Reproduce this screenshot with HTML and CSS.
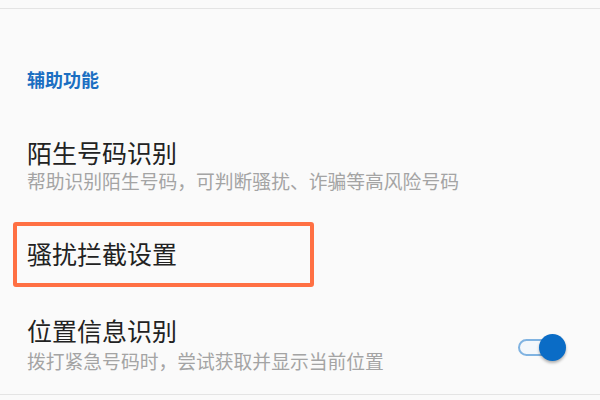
FILE: index.html
```html
<!doctype html>
<html>
  <head>
    <title>辅助功能</title>
    <link rel="stylesheet" href="styles.css">
  </head>
  <body>
    <div class="top-bar"></div>
    <div class="settings">
      <div class="section-title">辅助功能</div>

      <div class="item">
        <div class="item-title">陌生号码识别</div>
        <div class="item-desc">帮助识别陌生号码，可判断骚扰、诈骗等高风险号码</div>
      </div>

      <div class="item highlight">
        <div class="item-title">骚扰拦截设置</div>
      </div>

      <div class="item item-switch">
        <div class="item-text">
          <div class="item-title">位置信息识别</div>
          <div class="item-desc">拨打紧急号码时，尝试获取并显示当前位置</div>
        </div>
        <div class="switch on">
          <div class="switch-track"></div>
          <div class="switch-thumb"></div>
        </div>
      </div>
    </div>
  </body>
</html>
```

FILE: styles.css
```css
* { margin: 0; padding: 0; box-sizing: border-box; }
body {
  background: #fafafa;
  font-family: "Noto Sans CJK SC", "Noto Sans", sans-serif;
  width: 600px;
  height: 400px;
  overflow: hidden;
}

.top-bar {
  height: 9px;
  border-bottom: 1px solid #e4e4e4;
}

.settings {
  padding-bottom: 20px;
  border-bottom: 1px solid #e4e4e4;
}

.section-title {
  margin: 57px 0 0 27px;
  font-size: 18px;
  line-height: 26px;
  font-weight: bold;
  color: #1b6fc2;
}

.item {
  padding: 0 34px 0 27px;
  margin-top: 44px;
}

.item-title {
  font-size: 25px;
  line-height: 32px;
  color: #222;
}

.item-desc {
  font-size: 18.8px;
  line-height: 26px;
  color: #a4a4a4;
}

/* highlighted row */
.highlight {
  margin: 28px 286px 0 13px;
  padding: 11px 0 14px 10px;
  border: 4px solid #ff7043;
  border-radius: 3px;
}

.item-switch {
  margin-top: 27px;
  display: flex;
  align-items: center;
  justify-content: space-between;
}

.item-switch .item-desc { margin-top: 2px; }

.switch {
  position: relative;
  width: 48px;
  height: 27px;
  margin-top: 6px;
}

.switch-track {
  width: 42px;
  height: 17px;
  margin-top: 5px;
  border: 2.5px solid #80b3e1;
  border-radius: 9px;
  background: #f3f7fb;
}

.switch-thumb {
  position: absolute;
  top: 0;
  right: 0;
  width: 27px;
  height: 27px;
  border-radius: 50%;
  background: #0a6cc6;
  box-shadow: 0 2px 3px rgba(0, 0, 0, 0.3);
}
```
